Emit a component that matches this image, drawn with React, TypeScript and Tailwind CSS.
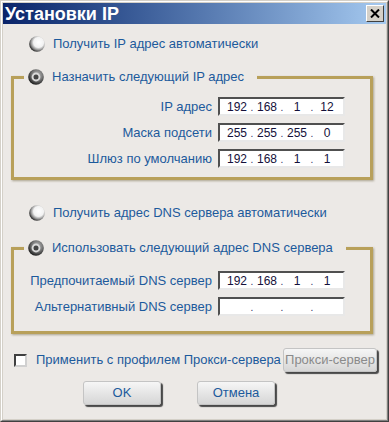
import React from "react";

function Radio({ checked }: { checked: boolean }) {
  if (checked) {
    return (
      <svg width="16" height="16" viewBox="0 0 16 16" className="shrink-0">
        <defs>
          <radialGradient id="rs" cx="58%" cy="38%" r="62%">
            <stop offset="0%" stopColor="#bdbdbd" />
            <stop offset="55%" stopColor="#7a7a7a" />
            <stop offset="100%" stopColor="#1e1e1e" />
          </radialGradient>
        </defs>
        <circle cx="8" cy="8" r="7.8" fill="url(#rs)" />
        <circle cx="8" cy="8" r="4.4" fill="#dadada" />
        <circle cx="8" cy="8" r="2.5" fill="#444" />
      </svg>
    );
  }
  return (
    <svg width="16" height="16" viewBox="0 0 16 16" className="shrink-0">
      <defs>
        <radialGradient id="ru" cx="60%" cy="40%" r="64%">
          <stop offset="0%" stopColor="#ffffff" />
          <stop offset="50%" stopColor="#f2f2f2" />
          <stop offset="78%" stopColor="#8a8a8a" />
          <stop offset="100%" stopColor="#1a1a1a" />
        </radialGradient>
      </defs>
      <circle cx="8" cy="8" r="7.8" fill="url(#ru)" />
    </svg>
  );
}

function IpBox({ parts }: { parts: string[] }) {
  return (
    <div className="w-[127px] h-[19px] bg-white border-2 border-t-[#505050] border-l-[#505050] border-r-[#e8e8e8] border-b-[#e8e8e8] flex items-center pl-[5px] text-[12px] text-[#14103a] leading-none">
      {parts.map((p, i) => (
        <React.Fragment key={i}>
          <span className="w-[24px] text-center">{p}</span>
          {i < 3 && <span className="w-[6px] text-center self-end pb-[1px] text-[10px] text-[#303060]">.</span>}
        </React.Fragment>
      ))}
    </div>
  );
}

function Row({ label, parts }: { label: string; parts: string[] }) {
  return (
    <div className="flex items-center justify-end gap-[6px] pr-[25px] h-[19px]">
      <span className="text-[#1c5a9c]">{label}</span>
      <IpBox parts={parts} />
    </div>
  );
}

function Group({ legend, children, pt, pb }: { legend: string; children: React.ReactNode; pt: string; pb: string }) {
  return (
    <div className={`relative ml-[8px] mr-[13px] border-[3px] border-[#b8a05a] shadow-[1px_1px_2px_rgba(90,80,40,0.45)] ${pt} ${pb} flex flex-col gap-[7px]`}>
      <div className="absolute left-[10px] top-[-10px] h-[16px] bg-[#ece9e6] flex items-center gap-[8px] pl-[4px] pr-[13px]">
        <Radio checked />
        <span className="text-[#1c5a9c]">{legend}</span>
      </div>
      {children}
    </div>
  );
}

function Btn({ children, className = "", disabled = false }: { children: React.ReactNode; className?: string; disabled?: boolean }) {
  return (
    <div
      className={`h-[24px] rounded-[3px] bg-gradient-to-b from-[#f6f6f6] to-[#d6d6d6] border border-[#c4c4c4] shadow-[2px_2px_1px_#484848] flex items-center justify-center ${disabled ? "text-[#8a8a8a]" : "text-[#1c5a9c]"} ${className}`}
    >
      {children}
    </div>
  );
}

export default function App() {
  return (
    <div className="w-[389px] h-[422px] border border-t-[#d4d0c8] border-l-[#d4d0c8] border-r-[#404040] border-b-[#404040] font-['Liberation_Sans',Arial,sans-serif] text-[13px]">
      <div className="w-full h-full border border-t-white border-l-white border-r-[#808080] border-b-[#808080] bg-[#d4d0c8] p-[1px] flex flex-col">
        <div className="h-[21px] bg-gradient-to-r from-[#0a246a] to-[#a6caf0] flex items-center justify-between pl-[2px] pr-[2px] shrink-0">
          <span className="text-white font-bold text-[18px] leading-none">Установки IP</span>
          <div className="w-[18px] h-[17px] bg-[#d4d0c8] border border-t-white border-l-white border-r-[#404040] border-b-[#404040] flex items-center justify-center">
            <svg width="10" height="9" viewBox="0 0 10 9">
              <path d="M1 0.5 L9 8.5 M9 0.5 L1 8.5" stroke="#000" strokeWidth="2" />
            </svg>
          </div>
        </div>
        <div className="flex-1 bg-[#ece9e6] flex flex-col">
          <div className="mt-[12px] h-[16px] flex items-center gap-[8px] pl-[26px]">
            <Radio checked={false} />
            <span className="text-[#1c5a9c]">Получить IP адрес автоматически</span>
          </div>
          <div className="mt-[24px]">
            <Group legend="Назначить следующий IP адрес" pt="pt-[18px]" pb="pb-[9px]">
              <Row label="IP адрес" parts={["192", "168", "1", "12"]} />
              <Row label="Маска подсети" parts={["255", "255", "255", "0"]} />
              <Row label="Шлюз по умолчанию" parts={["192", "168", "1", "1"]} />
            </Group>
          </div>
          <div className="mt-[25px] h-[16px] flex items-center gap-[8px] pl-[26px]">
            <Radio checked={false} />
            <span className="text-[#1c5a9c]">Получить адрес DNS сервера автоматически</span>
          </div>
          <div className="mt-[26px]">
            <Group legend="Использовать следующий адрес DNS сервера" pt="pt-[21px]" pb="pb-[15px]">
              <Row label="Предпочитаемый DNS сервер" parts={["192", "168", "1", "1"]} />
              <Row label="Альтернативный DNS сервер" parts={["", "", "", ""]} />
            </Group>
          </div>
          <div className="mt-[14px] h-[24px] flex items-center pl-[11px] pr-[9px]">
            <div className="w-[13px] h-[13px] bg-white border-2 border-t-[#404040] border-l-[#404040] border-r-[#d0d0d0] border-b-[#d0d0d0]" />
            <span className="ml-[9px] text-[#1c5a9c]">Применить с профилем Прокси-сервера</span>
            <div className="flex-1" />
            <Btn disabled className="w-[94px]">Прокси-сервер</Btn>
          </div>
          <div className="mt-[9px] flex pl-[80px] gap-[36px]">
            <Btn className="w-[78px]">OK</Btn>
            <Btn className="w-[78px]">Отмена</Btn>
          </div>
        </div>
      </div>
    </div>
  );
}
